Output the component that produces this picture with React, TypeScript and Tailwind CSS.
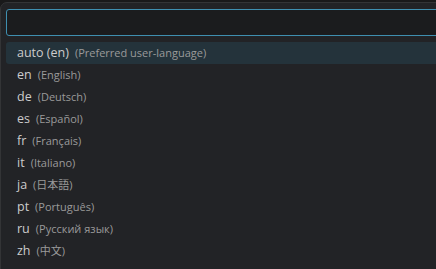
import React from 'react';

const languages = [
  { code: 'auto (en)', name: 'Preferred user-language' },
  { code: 'en', name: 'English' },
  { code: 'de', name: 'Deutsch' },
  { code: 'es', name: 'Español' },
  { code: 'fr', name: 'Français' },
  { code: 'it', name: 'Italiano' },
  { code: 'ja', name: '日本語' },
  { code: 'pt', name: 'Português' },
  { code: 'ru', name: 'Русский язык' },
  { code: 'zh', name: '中文' },
];

const App: React.FC = () => {
  return (
    <div
      className="w-[436px] h-[269px] overflow-hidden bg-[#19191a] pt-[2px]"
      style={{ fontFamily: '"Open Sans", "Noto Sans CJK JP", sans-serif' }}
    >
      <div className="w-[470px] h-[290px] rounded-[7px] border border-[#333436] bg-[#222326] pt-[6px] pl-[5px]">
        <div className="h-[27px] rounded-[3px] border border-[#3f8fb0] bg-[#1b1c1e]" />
        <ul className="mt-[6px]">
          {languages.map((lang, i) => (
            <li
              key={lang.code}
              className={`flex h-[22px] items-center rounded-[3px] pt-[1px] pl-[11px] ${i === 0 ? 'bg-[#24333b]' : ''}`}
            >
              <span className="text-[12.5px] text-[#cccccc]">{lang.code}</span>
              <span className="ml-[6px] text-[11px] text-[#9a9a9a]">({lang.name})</span>
            </li>
          ))}
        </ul>
      </div>
    </div>
  );
};

export default App;
